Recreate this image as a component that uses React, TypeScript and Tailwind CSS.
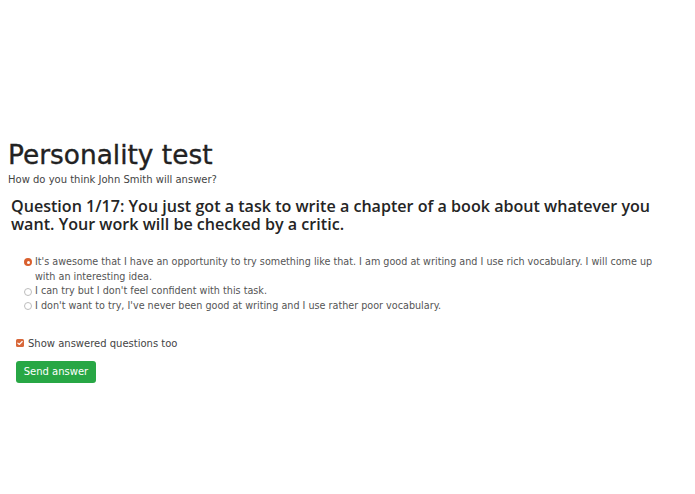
import React from "react";

const options = [
  {
    lines: [
      "It's awesome that I have an opportunity to try something like that. I am good at writing and I use rich vocabulary. I will come up",
      "with an interesting idea.",
    ],
    checked: true,
  },
  { lines: ["I can try but I don't feel confident with this task."], checked: false },
  { lines: ["I don't want to try, I've never been good at writing and I use rather poor vocabulary."], checked: false },
];

export default function App() {
  return (
    <div className="min-h-[494px] w-full bg-white pl-[8px] pr-[10px] pt-[139px] font-['DejaVu_Sans',sans-serif]">
      <h1 className="text-[26.4px] leading-[31px] font-normal text-[#222222] [-webkit-text-stroke:0.35px_#222222]">Personality test</h1>
      <p className="mt-[3px] text-[10px] leading-[14px] text-[#444444]">How do you think John Smith will answer?</p>
      <h2 className="mt-[11px] pl-[3px] font-['Open_Sans',sans-serif] text-[16.1px] leading-[17.5px] font-semibold text-[#252525] whitespace-nowrap">
        <span className="block">Question 1/17: You just got a task to write a chapter of a book about whatever you</span>
        <span className="block">want. Your work will be checked by a critic.</span>
      </h2>
      <div className="mt-[22px] flex flex-col pl-[16px]">
        {options.map((o, i) => (
          <label key={i} className="flex items-start gap-[3px] text-[9.65px] leading-[14.7px] text-[#555555]">
            {o.checked ? (
              <span className="mt-[3.3px] flex h-[8px] w-[8px] shrink-0 items-center justify-center rounded-full bg-[#d9602e]">
                <span className="h-[3px] w-[3px] rounded-full bg-white" />
              </span>
            ) : (
              <span className="mt-[3.3px] h-[8px] w-[8px] shrink-0 rounded-full border border-[#bdbdbd] bg-white" />
            )}
            <span className="whitespace-nowrap">
              {o.lines.map((l, j) => (
                <React.Fragment key={j}>
                  {j > 0 && <br />}
                  {l}
                </React.Fragment>
              ))}
            </span>
          </label>
        ))}
      </div>
      <label className="mt-[22px] flex items-center gap-[4px] pl-[8px] text-[10px] leading-[15px] text-[#444444]">
        <span className="flex h-[8px] w-[8px] items-center justify-center rounded-[1.5px] bg-[#d8683a]">
          <svg viewBox="0 0 8 8" className="h-[8px] w-[8px]">
            <path d="M1.8 4.1 L3.3 5.5 L6.2 2.5" fill="none" stroke="white" strokeWidth="1.1" strokeLinecap="round" strokeLinejoin="round" />
          </svg>
        </span>
        Show answered questions too
      </label>
      <button className="ml-[8px] mt-[10px] flex h-[22px] w-[80px] items-center justify-center rounded-[3px] bg-[#28a745] text-[10px] text-white">
        Send answer
      </button>
    </div>
  );
}
